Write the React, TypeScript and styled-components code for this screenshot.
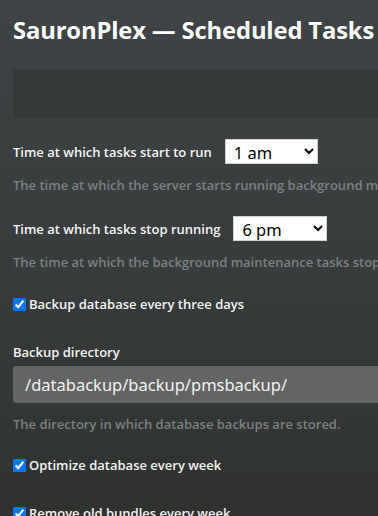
import styled, { createGlobalStyle } from 'styled-components';

const GlobalStyle = createGlobalStyle`
  html, body {
    margin: 0;
    padding: 0;
    overflow: hidden;
  }
  body {
    background: linear-gradient(180deg, #3f4446 0%, #383c3c 50%, #2f322f 100%);
    min-height: 516px;
    font-family: 'Open Sans', 'Liberation Sans', sans-serif;
    color: #f2f2f2;
  }
`;

const Page = styled.div`
  width: 760px;
  padding: 0 13px;
  height: 516px;
`;

const Title = styled.h1`
  margin: 0;
  padding-top: 14px;
  font-size: 23.8px;
  font-weight: 700;
  line-height: 32px;
  color: #ffffff;
  letter-spacing: -0.15px;
  white-space: nowrap;
`;

const Toolbar = styled.div`
  margin-top: 23px;
  height: 49px;
  background: #363a3a;
`;

const Field = styled.div`
  display: flex;
  flex-direction: column;
  margin-top: ${({ $gap }: { $gap: number }) => $gap}px;
`;

const Row = styled.label`
  display: flex;
  align-items: center;
  gap: 13px;
  font-size: 13px;
  font-weight: 600;
  color: #f4f4f4;
  white-space: nowrap;
`;

const Select = styled.select`
  font-family: 'Noto Sans', 'Open Sans', sans-serif;
  font-size: 16.5px;
  height: 25px;
  width: ${({ $w }: { $w: number }) => $w}px;
  padding: 0 4px;
  border: 1px solid #d0d0d0;
  border-radius: 0;
  background: #ffffff;
  color: #000;
`;

const Help = styled.div`
  margin-top: 12px;
  font-size: 13px;
  font-weight: 600;
  color: #7b8081;
  white-space: nowrap;
`;

const CheckRow = styled.label`
  display: flex;
  align-items: center;
  gap: 3px;
  font-size: 13px;
  font-weight: 600;
  color: #f4f4f4;
  white-space: nowrap;

  input {
    margin: 0;
    width: 13px;
    height: 13px;
    accent-color: #0075ff;
  }
`;

const Heading = styled.div`
  font-size: 13px;
  font-weight: 600;
  color: #f4f4f4;
`;

const PathInput = styled.input`
  margin-top: 5px;
  height: 37px;
  box-sizing: border-box;
  padding: 0 12px;
  border: none;
  border-radius: 3px;
  background: #626564;
  color: #f2f2f2;
  font-family: 'Noto Sans', 'Open Sans', sans-serif;
  font-size: 16.5px;
  outline: none;
`;

const hours = ['12 am', '1 am', '2 am', '3 am', '4 am', '5 am', '6 am', '7 am', '8 am', '9 am', '10 am', '11 am',
  '12 pm', '1 pm', '2 pm', '3 pm', '4 pm', '5 pm', '6 pm', '7 pm', '8 pm', '9 pm', '10 pm', '11 pm'];

const App = () => {
  return (
    <>
      <GlobalStyle />
      <Page>
        <Title>SauronPlex — Scheduled Tasks</Title>
        <Toolbar />

        <Field $gap={21}>
          <Row>
            Time at which tasks start to run
            <Select $w={93} defaultValue='1 am'>
              {hours.map((h) => <option key={h}>{h}</option>)}
            </Select>
          </Row>
          <Help>The time at which the server starts running background maintenance tasks.</Help>
        </Field>

        <Field $gap={22}>
          <Row>
            Time at which tasks stop running
            <Select $w={94} defaultValue='6 pm'>
              {hours.map((h) => <option key={h}>{h}</option>)}
            </Select>
          </Row>
          <Help>The time at which the background maintenance tasks stop running.</Help>
        </Field>

        <Field $gap={24}>
          <CheckRow>
            <input type='checkbox' defaultChecked />
            Backup database every three days
          </CheckRow>
        </Field>

        <Field $gap={30}>
          <Heading>Backup directory</Heading>
          <PathInput defaultValue='/databackup/backup/pmsbackup/' />
          <Help>The directory in which database backups are stored.</Help>
        </Field>

        <Field $gap={23}>
          <CheckRow>
            <input type='checkbox' defaultChecked />
            Optimize database every week
          </CheckRow>
        </Field>

        <Field $gap={30}>
          <CheckRow>
            <input type='checkbox' defaultChecked />
            Remove old bundles every week
          </CheckRow>
        </Field>
      </Page>
    </>
  );
};

export default App;
